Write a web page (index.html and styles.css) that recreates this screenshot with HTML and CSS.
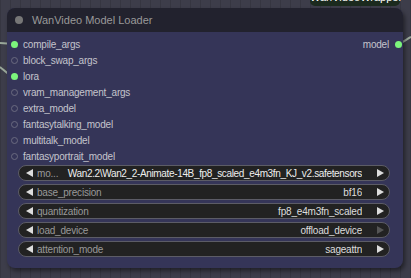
FILE: index.html
```html
<!DOCTYPE html>
<html lang="en">
<head>
    <meta charset="UTF-8">
    <meta name="viewport" content="width=device-width, initial-scale=1.0">
    <title>WanVideo Model Loader</title>
    <link rel="stylesheet" href="styles.css">
</head>
<body>
    <div class="canvas">
        <svg class="wires" width="411" height="278" viewBox="0 0 411 278">
            <path d="M0 43 L14 44" />
            <path d="M0 67 C6 72 8 75 14 75" />
            <path d="M396 44 C402 44 405 40 411 37" />
        </svg>

        <div class="group-badge">WanVideoWrapper</div>

        <div class="node">
            <div class="node-title">
                <span class="title-dot"></span>
                WanVideo Model Loader
            </div>
            <div class="node-body">
                <div class="slots">
                    <div class="slot"><span class="dot linked"></span>compile_args<span class="output">model <span class="dot linked"></span></span></div>
                    <div class="slot"><span class="dot"></span>block_swap_args</div>
                    <div class="slot"><span class="dot linked"></span>lora</div>
                    <div class="slot"><span class="dot"></span>vram_management_args</div>
                    <div class="slot"><span class="dot"></span>extra_model</div>
                    <div class="slot"><span class="dot"></span>fantasytalking_model</div>
                    <div class="slot"><span class="dot"></span>multitalk_model</div>
                    <div class="slot"><span class="dot"></span>fantasyportrait_model</div>
                </div>
                <div class="widgets">
                    <div class="widget">
                        <span class="arrow left"></span>
                        <span class="label">mo...</span>
                        <span class="value bright">Wan2.2\Wan2_2-Animate-14B_fp8_scaled_e4m3fn_KJ_v2.safetensors</span>
                        <span class="arrow right"></span>
                    </div>
                    <div class="widget">
                        <span class="arrow left"></span>
                        <span class="label">base_precision</span>
                        <span class="value">bf16</span>
                        <span class="arrow right"></span>
                    </div>
                    <div class="widget">
                        <span class="arrow left"></span>
                        <span class="label">quantization</span>
                        <span class="value">fp8_e4m3fn_scaled</span>
                        <span class="arrow right"></span>
                    </div>
                    <div class="widget">
                        <span class="arrow left"></span>
                        <span class="label">load_device</span>
                        <span class="value">offload_device</span>
                        <span class="arrow right dim"></span>
                    </div>
                    <div class="widget">
                        <span class="arrow left"></span>
                        <span class="label">attention_mode</span>
                        <span class="value">sageattn</span>
                        <span class="arrow right"></span>
                    </div>
                </div>
            </div>
        </div>
    </div>
</body>
</html>
```

FILE: styles.css
```css
body {
    margin: 0;
    padding: 0;
    font-family: "Liberation Sans", Arial, sans-serif;
}
.canvas {
    position: relative;
    width: 411px;
    height: 278px;
    overflow: hidden;
    background-color: #3d3d4a;
    background-image: linear-gradient(90deg, rgba(0, 0, 0, 0.12) 1px, transparent 1px);
    background-size: 10px 10px;
}
.wires {
    position: absolute;
    left: 0;
    top: 0;
}
.wires path {
    fill: none;
    stroke: #9aa89a;
    stroke-width: 2;
}
.group-badge {
    position: absolute;
    left: 310px;
    top: -11px;
    width: 90px;
    height: 17px;
    line-height: 17px;
    border-radius: 5px;
    background-color: #1b2a1e;
    color: #fff;
    font-size: 11px;
    text-align: center;
}
.node {
    position: absolute; /* node sits on the free canvas */
    left: 7px;
    top: 8px;
    width: 396px;
    height: 260px;
    border-radius: 8px;
    overflow: hidden;
    background-color: #353558;
    box-shadow: 2px 3px 4px rgba(0, 0, 0, 0.45);
}
.node-title {
    display: flex;
    align-items: center;
    height: 24px;
    padding-left: 8px;
    background-color: #22222e;
    color: #999;
    font-size: 11px;
}
.title-dot {
    width: 8px;
    height: 8px;
    border-radius: 50%;
    background-color: #777;
    margin-right: 9px;
}
.node-body {
    padding: 4px 0 0 0;
}
.slot {
    position: relative;
    display: flex;
    align-items: center;
    height: 16px;
    padding-left: 4px;
    color: #c4c4cc;
    font-size: 10px;
    letter-spacing: -0.2px;
}
.dot {
    box-sizing: border-box;
    width: 7px;
    height: 7px;
    border-radius: 50%;
    border: 1px solid #6a6a80;
    margin-right: 5px;
}
.dot.linked {
    border: none;
    background-color: #7cf57c;
}
.output {
    margin-left: auto;
    display: flex;
    align-items: center;
    padding-right: 1px;
}
.output .dot {
    margin: 0 0 0 6px;
}
.widgets {
    display: flex;
    flex-direction: column;
    gap: 3px;
    padding: 1px 13px 0 11px;
}
.widget {
    display: flex;
    align-items: center;
    height: 16px;
    box-sizing: border-box;
    border: 1px solid #5c5c66;
    border-radius: 8px;
    background-color: #222;
    padding: 0 5px 0 7px;
    font-size: 10px;
    letter-spacing: -0.2px;
    color: #999;
}
.label {
    flex-shrink: 0;
    margin-left: 4px;
}
.value {
    flex: 1;
    text-align: right;
    color: #ddd;
    white-space: nowrap;
    overflow: hidden;
    margin: 0 15px 0 8px;
}
.value.bright {
    color: #eee;
    margin-left: 3px;
    letter-spacing: -0.35px;
}
.arrow {
    width: 0;
    height: 0;
    border-top: 4px solid transparent;
    border-bottom: 4px solid transparent;
}
.arrow.left {
    border-right: 7px solid #ddd;
}
.arrow.right {
    border-left: 7px solid #ddd;
}
.arrow.right.dim {
    border-left-color: #555;
}
```
